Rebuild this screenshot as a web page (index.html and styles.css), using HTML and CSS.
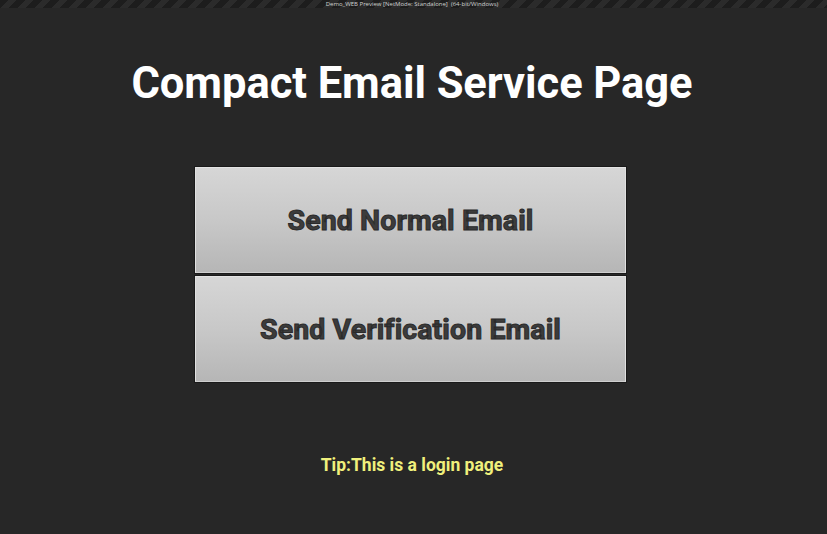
FILE: index.html
```html
<!DOCTYPE html>
<html>
<head>
<meta charset="utf-8">
<link rel="stylesheet" href="styles.css">
</head>
<body>
<div class="topbar"><span class="topbar-text">Demo_WEB Preview [NetMode: Standalone]  (64-bit/Windows)</span></div>
<main class="page">
  <h1 class="title">Compact Email Service Page</h1>
  <div class="buttons">
    <button class="btn">Send Normal Email</button>
    <button class="btn">Send Verification Email</button>
  </div>
  <p class="tip">Tip:This is a login page</p>
</main>
</body>
</html>
```
FILE: styles.css
```css
html, body {
  margin: 0;
  padding: 0;
}
body {
  width: 827px;
  height: 534px;
  overflow: hidden;
  background: #272727;
  font-family: Roboto, "Noto Sans", sans-serif;
}
.topbar {
  height: 8px;
  background: repeating-linear-gradient(135deg, #1d1d1d 0 6px, #2b2b2b 6px 12px);
  display: flex;
  justify-content: center;
  align-items: center;
  padding-right: 3px;
}
.topbar-text {
  font-family: "Open Sans", sans-serif;
  font-size: 6px;
  line-height: 8px;
  color: #d0d0d0;
  white-space: pre;
}
.page {
  display: flex;
  flex-direction: column;
  align-items: center;
  padding-right: 3px;
}
.title {
  margin: 46px 0 0;
  font-size: 43.5px;
  line-height: 60px;
  font-weight: 700;
  color: #ffffff;
  letter-spacing: -0.05px;
}
.buttons {
  margin: 53px 3px 0 0;
  display: flex;
  flex-direction: column;
  gap: 3px;
}
.btn {
  width: 431px;
  height: 106px;
  margin: 0;
  padding: 0;
  border: 1px solid #e0e0e0;
  border-top-color: #e4e4e4;
  border-bottom-color: #cfcfcf;
  outline: 1px solid #1a1a1a;
  background: linear-gradient(to bottom, #d6d6d6 0%, #c8c8c8 50%, #b6b6b6 100%);
  font-family: Roboto, sans-serif;
  font-weight: 700;
  font-size: 28.5px;
  letter-spacing: 0.1px;
  color: #3c3c3c;
  -webkit-text-stroke: 1px #2a2a2a;
  cursor: pointer;
}
.tip {
  margin: 73px 0 0;
  font-size: 17.5px;
  font-weight: 700;
  color: #f0f07c;
}
```
